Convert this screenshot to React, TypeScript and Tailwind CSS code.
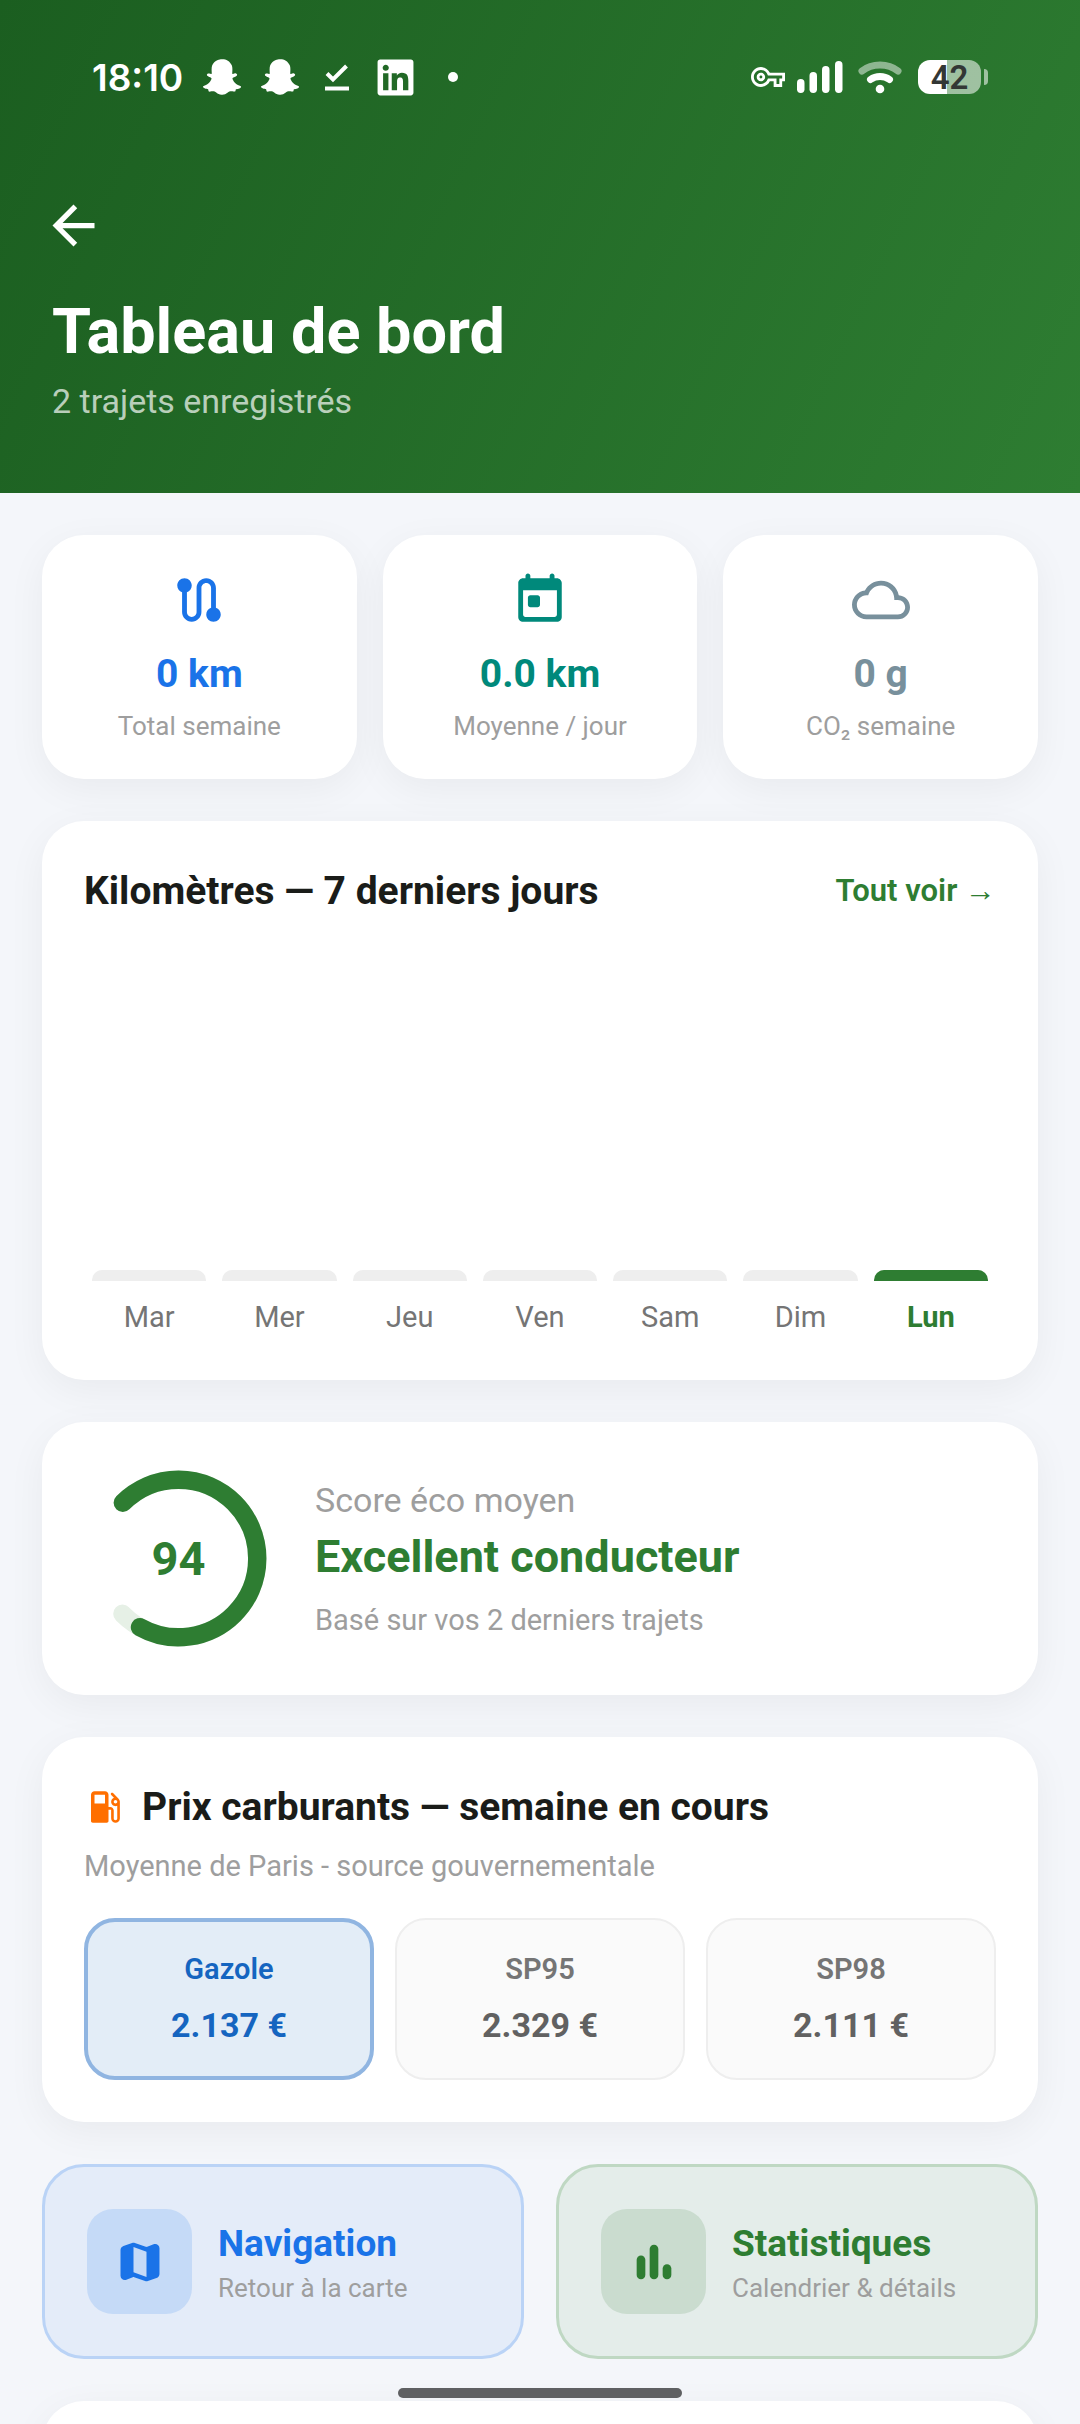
import type { ReactNode } from "react";
import clsx from "clsx";
import { FaLinkedin, FaSnapchatGhost } from "react-icons/fa";
import { MdArrowBack, MdCloudQueue, MdOutlineVpnKey } from "react-icons/md";

const days = [
  { label: "Mar", km: 0 },
  { label: "Mer", km: 0 },
  { label: "Jeu", km: 0 },
  { label: "Ven", km: 0 },
  { label: "Sam", km: 0 },
  { label: "Dim", km: 0 },
  { label: "Lun", km: 0, today: true },
];

const fuels = [
  { name: "Gazole", price: "2.137 €", selected: true },
  { name: "SP95", price: "2.329 €" },
  { name: "SP98", price: "2.111 €" },
];

const score = 94;

function RouteIcon() {
  return (
    <svg viewBox="0 0 24 24" className="size-[58px] fill-current" aria-hidden="true">
      <path d="M19 15.18V7c0-2.21-1.79-4-4-4s-4 1.79-4 4v10c0 1.1-.9 2-2 2s-2-.9-2-2V8.82C8.16 8.4 9 7.3 9 6c0-1.66-1.34-3-3-3S3 4.34 3 6c0 1.3.84 2.4 2 2.82V17c0 2.21 1.79 4 4 4s4-1.79 4-4V7c0-1.1.9-2 2-2s2 .9 2 2v8.18c-1.16.41-2 1.51-2 2.82 0 1.66 1.34 3 3 3s3-1.34 3-3c0-1.3-.84-2.4-2-2.82z" />
    </svg>
  );
}

function TodayIcon() {
  return (
    <svg viewBox="0 0 24 24" className="size-[58px] fill-current" aria-hidden="true">
      <path d="M19 3h-1V2c0-.55-.45-1-1-1s-1 .45-1 1v1H8V2c0-.55-.45-1-1-1s-1 .45-1 1v1H5c-1.11 0-1.99.9-1.99 2L3 19c0 1.1.89 2 2 2h14c1.1 0 2-.9 2-2V5c0-1.1-.9-2-2-2zm-1 16H6c-.55 0-1-.45-1-1V8h14v10c0 .55-.45 1-1 1zM8 10h3c.55 0 1 .45 1 1v3c0 .55-.45 1-1 1H8c-.55 0-1-.45-1-1v-3c0-.55.45-1 1-1z" />
    </svg>
  );
}

function FuelIcon() {
  return (
    <svg viewBox="0 0 24 24" className="size-[42px] fill-[#ff6f00]" aria-hidden="true">
      <path d="M19.77 7.23l.01-.01-3.19-3.19c-.29-.29-.77-.29-1.06 0-.29.29-.29.77 0 1.06l1.58 1.58c-1.05.4-1.76 1.47-1.58 2.71.16 1.1 1.1 1.99 2.2 2.11.47.05.88-.03 1.27-.2v7.21c0 .55-.45 1-1 1s-1-.45-1-1V14c0-1.1-.9-2-2-2h-1V5c0-1.1-.9-2-2-2H6c-1.1 0-2 .9-2 2v15c0 .55.45 1 1 1h8c.55 0 1-.45 1-1v-6.5h1.5v4.86c0 1.31.94 2.5 2.24 2.63 1.5.15 2.76-1.02 2.76-2.49V9c0-.69-.28-1.32-.73-1.77zM12 10H6V5h6v5zm6 0c-.55 0-1-.45-1-1s.45-1 1-1 1 .45 1 1-.45 1-1 1z" />
    </svg>
  );
}

function MapIcon() {
  return (
    <svg viewBox="0 0 24 24" className="size-[52px] fill-current" aria-hidden="true">
      <path d="M14.65 4.98l-5-1.75c-.42-.15-.88-.15-1.3-.01L4.36 4.56C3.55 4.84 3 5.6 3 6.46v11.85c0 1.41 1.41 2.37 2.72 1.86l2.93-1.14c.22-.09.47-.09.69-.01l5 1.75c.42.15.88.15 1.3.01l3.99-1.34c.81-.27 1.36-1.04 1.36-1.9V5.69c0-1.41-1.41-2.37-2.72-1.86l-2.93 1.14c-.22.08-.46.09-.69.01zM15 18.89l-6-2.11V5.11l6 2.11v11.67z" />
    </svg>
  );
}

function BarsIcon() {
  return (
    <svg viewBox="0 0 24 24" className="size-[52px] fill-current" aria-hidden="true">
      <rect x="4" y="9" width="4" height="11" rx="2" />
      <rect x="10" y="4" width="4" height="16" rx="2" />
      <rect x="16" y="13" width="4" height="7" rx="2" />
    </svg>
  );
}

function StatusBar() {
  return (
    <div className="flex h-[154px] items-center justify-between px-10 text-white">
      <div className="flex items-center">
        <span className="font-[Inter,sans-serif] text-[37px] leading-none font-semibold">18:10</span>
        <FaSnapchatGhost className="ml-5 size-[38px]" />
        <FaSnapchatGhost className="ml-5 size-[38px]" />
        <svg viewBox="0 0 24 27" className="ml-[26px] h-[27px] w-6" fill="none" stroke="currentColor" aria-hidden="true">
          <path d="M2 9.5l6 6L21.500 2" strokeWidth="4" />
          <path d="M0 24.500h24" strokeWidth="4" />
        </svg>
        <FaLinkedin className="ml-[26px] size-[41px]" />
        <span className="ml-8 size-[10px] rounded-full bg-white" />
      </div>

      <div className="flex items-center">
        <MdOutlineVpnKey className="size-[34px]" />
        <svg viewBox="0 0 46 34" className="ml-3 h-[34px] w-[46px]" fill="currentColor" aria-hidden="true">
          <rect x="0" y="19" width="7.500" height="14" rx="3.700" />
          <rect x="12.500" y="12" width="7.500" height="21" rx="3.700" />
          <rect x="25" y="6" width="7.500" height="27" rx="3.700" />
          <rect x="38" y="1" width="7.500" height="32" rx="3.700" />
        </svg>
        <svg viewBox="0 0 44 34" className="ml-[15px] h-[34px] w-11" fill="none" stroke="currentColor" strokeLinecap="round" aria-hidden="true">
          <path d="M4 11C14 3 30 3 40 11" strokeWidth="7" opacity="0.480" />
          <path d="M12.500 19.500C18 15.500 26 15.500 31.500 19.500" strokeWidth="7" />
          <circle cx="22" cy="29" r="4.300" fill="currentColor" stroke="none" />
        </svg>
        <div className="ml-4 flex h-[34px] w-[63px] items-center justify-center rounded-xl bg-linear-to-r from-white from-46% to-white/55 to-46%">
          <span className="text-[33px] leading-none font-semibold text-[#333735]">42</span>
        </div>
        <span className="ml-[3px] h-4 w-1 rounded-r-sm bg-white/55" />
      </div>
    </div>
  );
}

function Card({ className, children }: { className?: string; children?: ReactNode }) {
  return (
    <section className={clsx("rounded-[42px] bg-white shadow-[0_10px_39px_rgba(0,0,0,0.05)]", className)}>
      {children}
    </section>
  );
}

function StatCard({ icon, value, label, className }: { icon: ReactNode; value: string; label: string; className: string }) {
  return (
    <Card className={clsx("flex flex-1 flex-col items-center pt-9 pb-[34px]", className)}>
      {icon}
      <p className="mt-[17px] text-[39px] leading-[56px] font-bold">{value}</p>
      <p className="mt-[6px] text-[26px] leading-[37px] text-[#9e9e9e]">{label}</p>
    </Card>
  );
}

function ScoreRing() {
  // 270° gauge opened on the left side
  const r = 78.75;
  const length = 2 * Math.PI * r;
  const arc = length * 0.75;
  return (
    <div className="relative flex size-[189px] shrink-0 items-center justify-center">
      <svg viewBox="0 0 189 189" className="absolute inset-0" fill="none" strokeWidth="18.400" strokeLinecap="round" aria-hidden="true">
        <g transform="rotate(-135 94.5 94.5)">
          <circle cx="94.500" cy="94.500" r={r} stroke="#e6f0e6" strokeDasharray={`${arc} ${length}`} />
          <circle cx="94.500" cy="94.500" r={r} stroke="#2e7d32" strokeDasharray={`${(arc * score) / 100} ${length}`} />
        </g>
      </svg>
      <span className="text-[47px] leading-none font-bold text-[#2e7d32]">{score}</span>
    </div>
  );
}

export default function App() {
  return (
    <div className="relative flex h-screen flex-col overflow-hidden bg-[#f4f6fa] font-[Roboto,sans-serif]">
      <header className="shrink-0 bg-linear-[115deg] from-[#1b5e20] to-[#2e7d32] px-[52px] pb-[67px] text-white">
        <StatusBar />
        <button type="button" aria-label="Retour" className="mt-10 -ml-2.5 block">
          <MdArrowBack className="size-[63px]" />
        </button>
        <h1 className="mt-[30px] text-[63px] leading-[90px] font-bold">Tableau de bord</h1>
        <p className="text-[34px] leading-[49px] text-white/70">2 trajets enregistrés</p>
      </header>

      <main className="flex flex-col gap-[42px] p-[42px]">
        <div className="flex gap-[26px]">
          <StatCard className="text-[#1a73e8]" icon={<RouteIcon />} value="0 km" label="Total semaine" />
          <StatCard className="text-[#00897b]" icon={<TodayIcon />} value="0.0 km" label="Moyenne / jour" />
          <StatCard className="text-[#78909c]" icon={<MdCloudQueue className="size-[58px]" />} value="0 g" label="CO₂ semaine" />
        </div>

        <Card className="p-[42px]">
          <div className="flex items-center justify-between">
            <h2 className="text-[39px] leading-[56px] font-bold text-[#1a1c19]">Kilomètres — 7 derniers jours</h2>
            <a href="#trajets" className="text-[31px] leading-[56px] font-semibold text-[#2e7d32]">
              Tout voir →
            </a>
          </div>
          <div className="flex h-[419px]">
            {days.map((d) => (
              <div key={d.label} className="flex flex-1 flex-col justify-end px-2">
                <div
                  className={clsx("rounded-t-[10px]", d.today ? "bg-[#2e7d32]" : "bg-[#eeeeee]")}
                  style={{ height: Math.max(11, d.km) }}
                />
                <span
                  className={clsx(
                    "mt-[15px] text-center text-[29px] leading-[42px]",
                    d.today ? "font-bold text-[#2e7d32]" : "text-[#757575]"
                  )}
                >
                  {d.label}
                </span>
              </div>
            ))}
          </div>
        </Card>

        <Card className="flex items-center gap-[42px] p-[42px]">
          <ScoreRing />
          <div>
            <p className="text-[34px] leading-[49px] text-[#9e9e9e]">Score éco moyen</p>
            <p className="text-[45px] leading-[64px] font-bold text-[#2e7d32]">Excellent conducteur</p>
            <p className="mt-[10px] text-[29px] leading-[42px] text-[#9e9e9e]">Basé sur vos 2 derniers trajets</p>
          </div>
        </Card>

        <Card className="p-[42px]">
          <div className="flex items-center gap-4">
            <FuelIcon />
            <h2 className="text-[39px] leading-[56px] font-bold text-[#1a1c19]">Prix carburants — semaine en cours</h2>
          </div>
          <p className="mt-[10px] text-[29px] leading-[42px] text-[#9e9e9e]">Moyenne de Paris - source gouvernementale</p>
          <div className="mt-[31px] grid grid-cols-3 gap-[21px]">
            {fuels.map((f) => (
              <button
                key={f.name}
                type="button"
                aria-pressed={!!f.selected}
                className={clsx(
                  "rounded-[31px]",
                  f.selected
                    ? "border-4 border-[#90b5e1] bg-[#e3edf7] py-[26px] text-[#1565c0]"
                    : "border-2 border-[#eeeeee] bg-[#fafafa] py-7 text-[#616161]"
                )}
              >
                <span className={clsx("block text-[29px] leading-[42px] font-semibold", !f.selected && "text-[#757575]")}>
                  {f.name}
                </span>
                <span className="mt-[10px] block text-[34px] leading-[50px] font-bold">{f.price}</span>
              </button>
            ))}
          </div>
        </Card>

        <div className="flex gap-8">
          <button
            type="button"
            className="flex flex-1 items-center gap-[26px] rounded-[42px] border-[3px] border-[#bad3f6] bg-[#e4ecf9] p-[42px] text-left"
          >
            <span className="flex size-[105px] shrink-0 items-center justify-center rounded-[26px] bg-[#c5daf7] text-[#1a73e8]">
              <MapIcon />
            </span>
            <span>
              <span className="block text-[37px] leading-[53px] font-bold text-[#1a73e8]">Navigation</span>
              <span className="block text-[26px] leading-[37px] text-[#9e9e9e]">Retour à la carte</span>
            </span>
          </button>
          <button
            type="button"
            className="flex flex-1 items-center gap-[26px] rounded-[42px] border-[3px] border-[#bfd8c3] bg-[#e4edea] p-[42px] text-left"
          >
            <span className="flex size-[105px] shrink-0 items-center justify-center rounded-[26px] bg-[#cadccf] text-[#2e7d32]">
              <BarsIcon />
            </span>
            <span>
              <span className="block text-[37px] leading-[53px] font-bold text-[#2e7d32]">Statistiques</span>
              <span className="block text-[26px] leading-[37px] text-[#9e9e9e]">Calendrier &amp; détails</span>
            </span>
          </button>
        </div>

        {/* next section, mostly below the fold */}
        <Card className="h-40" />
      </main>

      <div className="absolute bottom-[26px] left-1/2 h-[10px] w-[284px] -translate-x-1/2 rounded-full bg-[#5f6062]" />
    </div>
  );
}
